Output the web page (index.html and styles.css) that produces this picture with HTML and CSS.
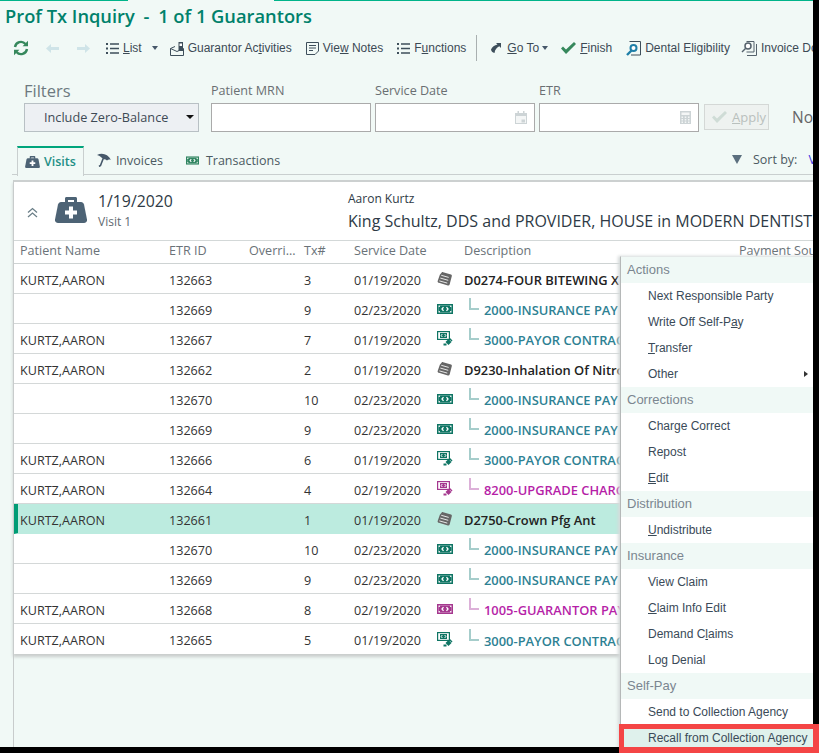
FILE: index.html
```html
<!doctype html>
<html lang="en-US">
<head>
	<meta charset="utf-8">
	<title>Prof Tx Inquiry</title>
	<link rel="stylesheet" href="styles.css">
</head>
<body>
<svg class="sprite" width="0" height="0">
	<symbol id="i-case" viewBox="0 0 32 26"><path d="M10 6V1.500C10 .6 10.600 0 11.500 0h9c.9 0 1.500.6 1.500 1.500V6h-3V3h-6v3z" fill="currentColor"/><path d="M6 5h20c1.500 0 2.500 1 3 2.500l3 15c.3 2-1 3.500-3 3.500H3c-2 0-3.300-1.500-3-3.500l3-15C3.500 6 4.500 5 6 5z" fill="currentColor"/><path d="M14 9.500h4v4h4v4h-4v4h-4v-4h-4v-4h4z" fill="#fff"/></symbol>
	<symbol id="i-bill" viewBox="0 0 16 10"><path d="M0 0h16v10H0z" fill="currentColor"/><path d="M1.500 1.500h13v7h-13z" fill="#fff"/><path d="M3 1.500h10c-.5 1.200.5 1.500 1.500 1.800v3.400c-1 .3-2 .6-1.500 1.800H3c.5-1.200-.5-1.500-1.500-1.800V3.300C2.500 3 3.500 2.700 3 1.500z" fill="currentColor"/><path d="M6.500 3.200 5 5l1.500 1.800M9.500 3.200 11 5 9.500 6.800" fill="none" stroke="#fff" stroke-width="1.300"/></symbol>
	<symbol id="i-pay" viewBox="0 0 16 15"><path d="M0 0h13v9H0z" fill="currentColor"/><path d="M1.200 1.200h10.600v6.600H1.200z" fill="#fff"/><path d="M3 2h7v5H3z" fill="currentColor"/><path d="M5.300 3 4.200 4.500 5.300 6M7.700 3l1.100 1.500L7.700 6" fill="none" stroke="#fff"/><path d="M8.500 11 11.500 8l3 3-3 3z" fill="currentColor"/><path d="M13 7l2.500 2.500-1 1L12 8z" fill="currentColor"/><path d="M6.500 12.500h3v2h-3z" fill="currentColor"/></symbol>
	<symbol id="i-stack" viewBox="0 0 16 15"><path d="M5 .5c.5-.4 1-.5 1.500-.3l8.500 2.600c.8.3 1.100 1 .8 1.800l-2.300 8.700c-.3.9-1 1.400-1.900 1.100L2 11.500C1 11.200.4 10.500.7 9.600L3 3z" fill="currentColor"/><path d="M4.500 3.500l8 2.300M3.500 6.500l8.500 2.400M2.500 9.500l8.500 2.400" stroke="#fff" stroke-width=".9" fill="none"/></symbol>
	<symbol id="i-list" viewBox="0 0 13 11"><path d="M0 0h2v2H0zM4 .3h9v1.400H4zM0 4.500h2v2H0zM4 4.800h9v1.400H4zM0 9h2v2H0zM4 9.300h9v1.400H4z" fill="currentColor"/></symbol>
</svg>

<div class="frame">
	<div class="topline"><b></b><i></i><b class="grow"></b></div>
	<h1 class="title">Prof Tx Inquiry <span class="dash">-</span> 1 of 1 Guarantors</h1>

	<div class="toolbar">
		<svg class="tb-refresh" width="16" height="16" viewBox="0 0 16 16"><path d="M2 7a6 6 0 0 1 10.500-3M14 9a6 6 0 0 1-10.500 3" fill="none" stroke="#36885c" stroke-width="2.400"/><path d="M15 .8v5.400H9.600zM1 15.200V9.800h5.400z" fill="#36885c"/></svg>
		<span class="nav">
			<svg width="13" height="9" viewBox="0 0 13 9"><path d="M0 4.500 5 0v3h8v3H5v3z" fill="#cfe4e8"/></svg>
			<svg width="13" height="9" viewBox="0 0 13 9"><path d="M13 4.500 8 0v3H0v3h8v3z" fill="#cfe4e8"/></svg>
		</span>
		<span class="tool tool-list"><svg class="ink" width="13" height="11"><use href="#i-list"/></svg><span><u>L</u>ist</span><i class="caret caret-list"></i></span>
		<span class="tool"><svg width="14" height="15" viewBox="0 0 14 15"><path d="M.5 7.500l6.500 3 6.500-3v7H.5zM.5 7.500 5 5.500" fill="none" stroke="#3e4f5b"/><path d="M8.500 1h4.500v9H8.500z" fill="#3e4f5b"/><path d="M9.500 2.500H12V5H9.500z" fill="#fff"/></svg><span>Guarantor Ac<u>t</u>ivities</span></span>
		<span class="tool"><svg width="13" height="13" viewBox="0 0 13 13"><path d="M.5.500h12v8.500l-3.500 3.500H.5z" fill="none" stroke="#3e4f5b"/><path d="M3 3.500h7M3 6h7M3 8.500h4" stroke="#3e4f5b"/></svg><span>Vie<u>w</u> Notes</span></span>
		<span class="tool"><svg class="ink" width="13" height="11"><use href="#i-list"/></svg><span>F<u>u</u>nctions</span></span>
		<i class="sep"></i>
		<span class="tool tool-goto"><svg width="10" height="10" viewBox="0 0 10 10"><path d="M5 0h5v5L8.300 3.300C6 4.500 4 6.500 3.500 10 1.500 9.500 0 8 0 6.500 1 4 3.500 2.500 6.500 1.600z" fill="#3e4f5b"/></svg><span><u>G</u>o To</span><i class="caret"></i></span>
		<span class="tool"><svg width="15" height="12" viewBox="0 0 15 12"><path d="M0 6.500 2 4.500l3 3L13 0l2 2L5 12z" fill="#36885c"/></svg><span><u>F</u>inish</span></span>
		<span class="tool tool-dental"><svg width="15" height="15" viewBox="0 0 15 15"><path d="M3.500.500h11v13.500H5" fill="none" stroke="#3e4f5b"/><circle cx="7.500" cy="7" r="3" fill="#fff" stroke="#1f7fa8" stroke-width="2"/><path d="M5.500 9.500 1 14" stroke="#1f7fa8" stroke-width="2.400"/></svg><span>Dental Eligibility</span></span>
		<span class="tool"><svg width="16" height="15" viewBox="0 0 16 15"><path d="M5.500.500h7.500v10.500H5.500M15.500 3v11.500H6" fill="none" stroke="#55626c"/><circle cx="7" cy="5" r="3" fill="#fff" stroke="#55626c" stroke-width="1.500"/><path d="M4.500 7.500 1 11" stroke="#55626c" stroke-width="1.500"/></svg><span>Invoice Do</span></span>
	</div>

	<div class="filters">
		<div class="f-group f-main">
			<label class="f-title">Filters</label>
			<div class="select">Include Zero-Balance<i class="caret caret-dark"></i></div>
		</div>
		<div class="f-group f-first">
			<label>Patient MRN</label>
			<div class="input"></div>
		</div>
		<div class="f-group">
			<label>Service Date</label>
			<div class="input">
				<svg width="12" height="13" viewBox="0 0 12 13"><path d="M0 2h12v11H0z" fill="#cdd4d6"/><path d="M1 5h10v7H1z" fill="#f4f6f6"/><path d="M2.500 0h1.500v3H2.500zM8 0h1.500v3H8zM6.500 8.500h3.500v3H6.500z" fill="#cdd4d6"/></svg>
			</div>
		</div>
		<div class="f-group">
			<label>ETR</label>
			<div class="input">
				<svg width="11" height="13" viewBox="0 0 11 13"><path d="M0 0h11v13H0z" fill="#cdd4d6"/><path d="M1.500 1.500h8v2.500h-8z" fill="#f4f6f6"/><path d="M1.500 5.500h1.500V7H1.500zM4.750 5.500h1.500V7h-1.500zM8 5.500h1.500V7H8zM1.500 8h1.500v1.500H1.500zM4.750 8h1.500v1.500h-1.500zM8 8h1.500v1.500H8zM1.500 10.500h1.500V12H1.500zM4.750 10.500h1.500V12h-1.500zM8 10.500h1.500V12H8z" fill="#f4f6f6"/></svg>
			</div>
		</div>
		<div class="apply"><svg width="15" height="12" viewBox="0 0 15 12"><path d="M0 6.500 2 4.500l3 3L13 0l2 2L5 12z" fill="#cfdcd6"/></svg><span><u>A</u>pply</span></div>
		<div class="no-text">No</div>
	</div>

	<div class="tabs">
		<div class="tab on"><svg class="slate" width="15" height="12"><use href="#i-case"/></svg>Visits</div>
		<div class="tab"><svg width="15" height="14" viewBox="0 0 15 14"><path d="M1 2C6-.5 12 1 15 7c-1.500-.8-3-.5-4 .5C9.500 6.300 8 6 7 6.800 6.500 4.800 4 2.800 1 2z" fill="#46586a"/><path d="M7 6 4.500 12.500 3 13.500" stroke="#46586a" stroke-width="1.600" fill="none"/></svg>Invoices</div>
		<div class="tab tab-tx"><svg class="green" width="13" height="9"><use href="#i-bill"/></svg>Transactions</div>
		<div class="sort"><i class="sort-arrow"></i><span>Sort by:</span><a>V</a></div>
	</div>

	<div class="panel">
		<div class="visit">
			<svg class="chev" width="11" height="11" viewBox="0 0 11 11"><path d="M1 5.500l4.500-4 4.500 4M1 10l4.500-4 4.500 4" fill="none" stroke="#6b7f88" stroke-width="1.300"/></svg>
			<svg class="slate bag" width="32" height="26"><use href="#i-case"/></svg>
			<div class="visit-date"><div class="big">1/19/2020</div><div class="sub">Visit 1</div></div>
			<div class="visit-who"><div class="who-name">Aaron Kurtz</div><div class="who-org">King Schultz, DDS and PROVIDER, HOUSE in MODERN DENTIST</div></div>
		</div>

		<div class="row head"><span>Patient Name</span><span>ETR ID</span><span class="clip">Overri...</span><span>Tx#</span><span>Service Date</span><span></span><span class="d-head">Description<em>Payment Sou</em></span></div>

		<div class="row"><span>KURTZ,AARON</span><span>132663</span><span></span><span>3</span><span>01/19/2020</span><svg class="gray ic" width="15" height="14"><use href="#i-stack"/></svg><span class="desc">D0274-FOUR BITEWING X</span></div>
		<div class="row"><span></span><span>132669</span><span></span><span>9</span><span>02/23/2020</span><svg class="teal ic" width="16" height="10"><use href="#i-bill"/></svg><span class="desc sub-t"><i class="tee"></i>2000-INSURANCE PAY</span></div>
		<div class="row"><span>KURTZ,AARON</span><span>132667</span><span></span><span>7</span><span>01/19/2020</span><svg class="teal ic" width="16" height="15"><use href="#i-pay"/></svg><span class="desc sub-t"><i class="tee"></i>3000-PAYOR CONTRAC</span></div>
		<div class="row"><span>KURTZ,AARON</span><span>132662</span><span></span><span>2</span><span>01/19/2020</span><svg class="gray ic" width="15" height="14"><use href="#i-stack"/></svg><span class="desc">D9230-Inhalation Of Nitro</span></div>
		<div class="row"><span></span><span>132670</span><span></span><span>10</span><span>02/23/2020</span><svg class="teal ic" width="16" height="10"><use href="#i-bill"/></svg><span class="desc sub-t"><i class="tee"></i>2000-INSURANCE PAY</span></div>
		<div class="row"><span></span><span>132669</span><span></span><span>9</span><span>02/23/2020</span><svg class="teal ic" width="16" height="10"><use href="#i-bill"/></svg><span class="desc sub-t"><i class="tee"></i>2000-INSURANCE PAY</span></div>
		<div class="row"><span>KURTZ,AARON</span><span>132666</span><span></span><span>6</span><span>01/19/2020</span><svg class="teal ic" width="16" height="15"><use href="#i-pay"/></svg><span class="desc sub-t"><i class="tee"></i>3000-PAYOR CONTRAC</span></div>
		<div class="row"><span>KURTZ,AARON</span><span>132664</span><span></span><span>4</span><span>02/19/2020</span><svg class="plum ic" width="16" height="15"><use href="#i-pay"/></svg><span class="desc sub-m"><i class="tee"></i>8200-UPGRADE CHARG</span></div>
		<div class="row sel"><span>KURTZ,AARON</span><span>132661</span><span></span><span>1</span><span>01/19/2020</span><svg class="gray ic" width="15" height="14"><use href="#i-stack"/></svg><span class="desc">D2750-Crown Pfg Ant</span></div>
		<div class="row"><span></span><span>132670</span><span></span><span>10</span><span>02/23/2020</span><svg class="teal ic" width="16" height="10"><use href="#i-bill"/></svg><span class="desc sub-t"><i class="tee"></i>2000-INSURANCE PAY</span></div>
		<div class="row"><span></span><span>132669</span><span></span><span>9</span><span>02/23/2020</span><svg class="teal ic" width="16" height="10"><use href="#i-bill"/></svg><span class="desc sub-t"><i class="tee"></i>2000-INSURANCE PAY</span></div>
		<div class="row"><span>KURTZ,AARON</span><span>132668</span><span></span><span>8</span><span>02/19/2020</span><svg class="plum ic" width="16" height="10"><use href="#i-bill"/></svg><span class="desc sub-m"><i class="tee"></i>1005-GUARANTOR PAY</span></div>
		<div class="row last"><span>KURTZ,AARON</span><span>132665</span><span></span><span>5</span><span>01/19/2020</span><svg class="teal ic" width="16" height="15"><use href="#i-pay"/></svg><span class="desc sub-t"><i class="tee"></i>3000-PAYOR CONTRAC</span></div>
	</div>
	<div class="rail"></div>

	<div class="menu">
		<div class="m-head">Actions</div>
		<div class="m-item">Next Responsible Party</div>
		<div class="m-item">Write Off Self-P<u>a</u>y</div>
		<div class="m-item"><u>T</u>ransfer</div>
		<div class="m-item">Other<i class="m-arrow"></i></div>
		<div class="m-head">Corrections</div>
		<div class="m-item">Charge Correct</div>
		<div class="m-item">Repost</div>
		<div class="m-item"><u>E</u>dit</div>
		<div class="m-head">Distribution</div>
		<div class="m-item"><u>U</u>ndistribute</div>
		<div class="m-head">Insurance</div>
		<div class="m-item">View Claim</div>
		<div class="m-item"><u>C</u>laim Info Edit</div>
		<div class="m-item">Demand C<u>l</u>aims</div>
		<div class="m-item">Lo<u>g</u> Denial</div>
		<div class="m-head">Self-Pay</div>
		<div class="m-item">Send to Collection Agency</div>
		<div class="m-item m-hot">Recall from Collection Agency</div>
	</div>
</div>
<div class="callout"></div>
</body>
</html>
```

FILE: styles.css
```css
html,body{margin:0;height:100%}
body{position:relative;width:819px;height:753px;overflow:hidden;background:#000;font:13px "Open Sans",sans-serif;color:#333}
.sprite{position:absolute}
u{text-underline-offset:1px}

.frame{position:relative;width:813px;height:747px;overflow:hidden;background:#f1f9f6}
.topline{display:flex;height:1px}
.topline b{width:128px;background:#00b48a}
.topline i{width:146px}
.topline .grow{flex:1;width:auto}
.title{margin:0;padding:2px 0 0 5px;height:26px;font-size:18.300px;line-height:26px;font-weight:600;color:#00816b;white-space:nowrap}
.dash{margin:0 4px}

.toolbar{display:flex;align-items:center;height:22px;margin-top:8px;padding-left:13px;font:12px "Liberation Sans",sans-serif;color:#3c4a55;white-space:nowrap}
.toolbar>*,.tool>*{flex:none}
.tb-refresh{margin-right:17px}
.nav{display:flex;gap:18px;margin-right:16px}
.tool{display:flex;align-items:center;gap:4px;margin-right:14px}
.tool-list{margin-right:12px}
.tool-list .caret{margin-left:6px}
.tool-goto{gap:6px;margin-right:13px}
.tool-goto .caret{margin-left:-3px}
.tool-dental{margin-right:11px}
.ink{color:#3e4f5b}
.caret{display:inline-block;border:3.500px solid transparent;border-top:4px solid #46586a;border-bottom:0}
.sep{width:1px;height:26px;background:#a9b0b0;margin:0 14px 0 -4px}

.filters{display:flex;align-items:flex-start;height:66px;margin-top:21px;padding-left:24px}
.f-group{display:flex;flex-direction:column;margin-right:4px}
.f-group label{height:23px;line-height:22px;font-size:12.600px;color:#6a6f72}
.f-group .f-title{font-size:16.500px;color:#6d7980}
.f-main{margin-right:12px}
.select{position:relative;box-sizing:border-box;width:175px;height:29px;line-height:27px;padding-left:19px;border:1px solid #b8c0c4;background:#edf0f3;font-size:12.700px;color:#3e4a55}
.caret-dark{position:absolute;right:4px;top:11px;border-top-color:#111;border-width:4px 4px 0}
.input{display:flex;align-items:center;justify-content:flex-end;box-sizing:border-box;width:160px;height:29px;padding-right:7px;border:1px solid #aaa;background:#fff}
.apply{display:flex;align-items:center;gap:5px;box-sizing:border-box;width:67px;height:26px;margin:24px 0 0 1px;padding-left:7px;border:1px solid #d4d8d6;background:#eef2f0;font-size:13px;color:#b9c0bd}
.no-text{margin:26px 0 0 23px;font-size:15.500px;color:#666}

.tabs{display:flex;align-items:center;height:29px;margin:0 0 0 12px;border-bottom:1px solid #c9cfcf;font-size:12.500px;color:#4c5a62;box-sizing:border-box}
.tabs svg{flex:none}
.tab{display:flex;align-items:center;gap:5px;height:100%;padding:0 5px;white-space:nowrap}
.tab.on{box-sizing:border-box;height:30px;margin:0 0 -1px 5px;padding:0 7px 0 7px;border:1px solid #c9cfcf;border-top:2px solid #00a57c;border-bottom:0;background:#f1f9f6;color:#1f8f86;font-weight:600;gap:4px}
.tab:nth-child(2){margin-left:7px}
.tab-tx{margin-left:13px;gap:7px}
.slate{color:#4d6375}
.green{color:#2f8560}
.sort{display:flex;align-items:center;gap:11px;margin-left:auto;white-space:nowrap;width:81px;overflow:hidden;padding-bottom:2px}
.sort-arrow{border:5px solid transparent;border-top:9px solid #5b6f7e;border-bottom:0;flex:none}
.sort a{color:#3a3ae0}

.panel{width:800px;margin:5px 0 0 13px;box-sizing:border-box;border-top:2px solid #ccd0d0;border-left:1px solid #c8cccc;background:#fff;box-shadow:0 3px 3px #c9cdcc;overflow:hidden}
.visit{display:flex;align-items:center;height:58px;border-bottom:1px solid #d3d8d8;white-space:nowrap}
.visit>*{flex:none}
.chev{margin:2px 0 0 13px}
.bag{margin:-2px 0 0 17px}
.visit-date{width:250px;margin-left:11px}
.big{font-size:15.800px;line-height:21px;color:#2e3a45}
.sub{font-size:12px;line-height:20px;color:#5f6a72}
.who-name{font-size:12px;line-height:15px;color:#2e3a45}
.who-org{margin-top:4px;font-size:16px;line-height:22px;color:#2e3a45}

.row{display:grid;grid-template-columns:149px 80px 55px 50px 83px 27px 1fr;align-items:center;box-sizing:border-box;height:30px;padding:3px 0 0 6px;border-bottom:1px solid #d4d8d8;font-size:12.600px;color:#333;white-space:nowrap}
.row.head{height:23px;padding:0 0 3px 6px;border-bottom-color:#ced3d3;color:#6a7278}
.row.last{border-bottom:0}
.row.sel{background:#bcebdf;border-left:4px solid #009c75;padding-left:2px;border-bottom-color:#bcebdf}
.d-head{position:relative}
.d-head em{position:absolute;left:275px;top:0;font-style:normal}
.clip{overflow:hidden}
.ic{justify-self:start;margin-top:-3px}
.gray{color:#666}
.teal{color:#0f7564}
.plum{color:#a5388f}
.desc{display:flex;align-items:center;font-size:12.900px;font-weight:600;color:#222}
.sub-t,.sub-m{padding-left:5px}
.sub-t{color:#2d8193}
.sub-m{color:#b61fa8}
.tee{width:8px;height:10px;margin:-12px 5px 0 0;border-left:2px solid #a6cdcb;border-bottom:2px solid #a6cdcb;flex:none}
.sub-m .tee{border-color:#dcb0d8}

.rail{position:absolute;left:13px;top:654px;bottom:0;width:1px;background:#c8cccc}

.menu{position:absolute;left:620px;top:256px;width:193px;box-sizing:border-box;border-left:1px solid #b5b8b8;border-top:1px solid #e4e8e8;background:#fff;box-shadow:-2px 0 3px #d6dada;font:12px "Liberation Sans",sans-serif;color:#3a4a58}
.m-head{height:26px;line-height:26px;padding-left:6px;background:#f0f9f6;font-size:13px;color:#7b8690}
.m-item{position:relative;height:26px;line-height:26px;padding-left:27px}
.m-hot{background:#dff1ec}
.m-arrow{position:absolute;right:5px;top:10px;border:3.500px solid transparent;border-left:4px solid #333;border-right:0}

.callout{position:absolute;left:619px;top:724px;width:200px;height:29px;box-sizing:border-box;border:solid #f44545;border-width:5px 6px 6px 5px}
```
